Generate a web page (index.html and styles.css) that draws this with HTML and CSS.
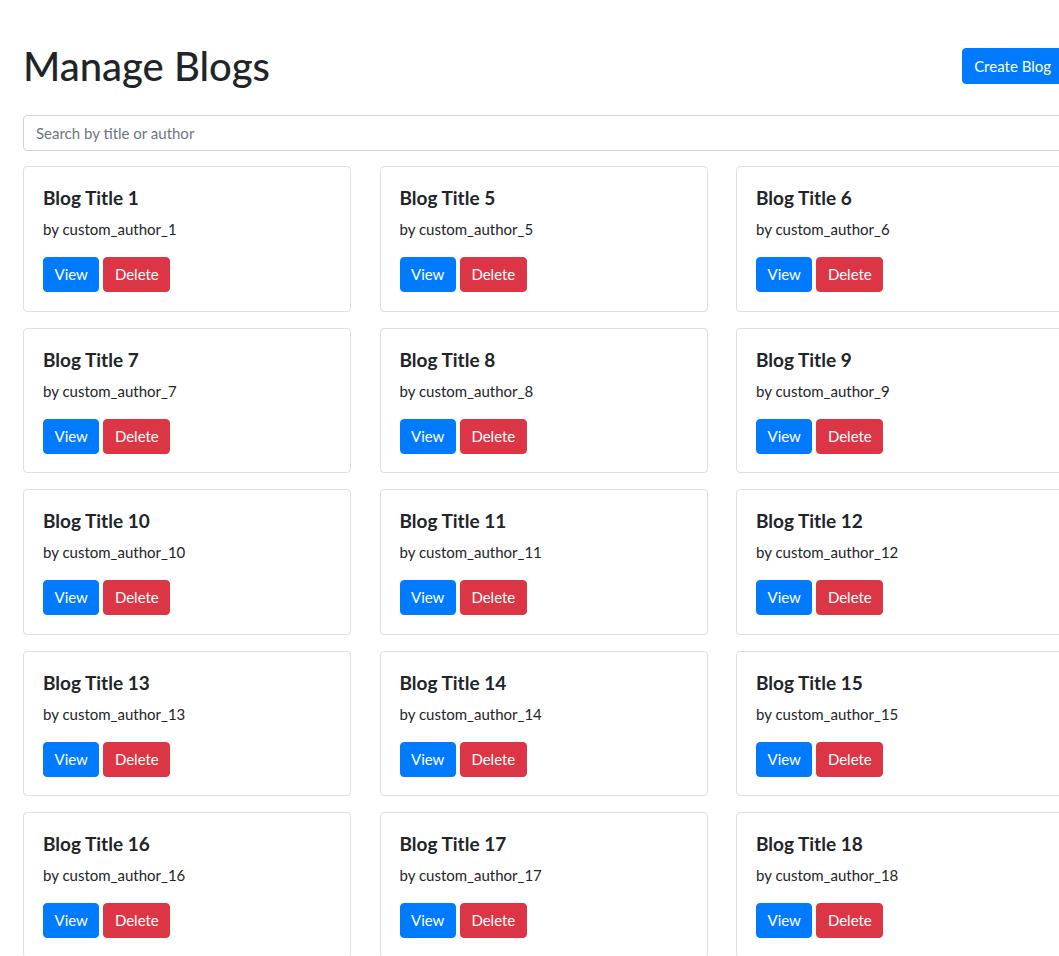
FILE: index.html
```html
<!DOCTYPE html>
<html lang="en">
<head>
<meta charset="utf-8">
<title>Manage Blogs</title>
<link rel="stylesheet" href="styles.css">
</head>
<body>
<div class="page">
  <header class="page-header">
    <h1 class="page-title">Manage Blogs</h1>
    <button class="btn btn-primary">Create Blog</button>
  </header>
  <input class="search" type="text" placeholder="Search by title or author">
  <div class="grid">
    <div class="card"><h5 class="card-title">Blog Title 1</h5><p class="card-author">by custom_author_1</p><div class="actions"><button class="btn btn-primary">View</button><button class="btn btn-danger">Delete</button></div></div>
    <div class="card"><h5 class="card-title">Blog Title 5</h5><p class="card-author">by custom_author_5</p><div class="actions"><button class="btn btn-primary">View</button><button class="btn btn-danger">Delete</button></div></div>
    <div class="card"><h5 class="card-title">Blog Title 6</h5><p class="card-author">by custom_author_6</p><div class="actions"><button class="btn btn-primary">View</button><button class="btn btn-danger">Delete</button></div></div>
    <div class="card"><h5 class="card-title">Blog Title 7</h5><p class="card-author">by custom_author_7</p><div class="actions"><button class="btn btn-primary">View</button><button class="btn btn-danger">Delete</button></div></div>
    <div class="card"><h5 class="card-title">Blog Title 8</h5><p class="card-author">by custom_author_8</p><div class="actions"><button class="btn btn-primary">View</button><button class="btn btn-danger">Delete</button></div></div>
    <div class="card"><h5 class="card-title">Blog Title 9</h5><p class="card-author">by custom_author_9</p><div class="actions"><button class="btn btn-primary">View</button><button class="btn btn-danger">Delete</button></div></div>
    <div class="card"><h5 class="card-title">Blog Title 10</h5><p class="card-author">by custom_author_10</p><div class="actions"><button class="btn btn-primary">View</button><button class="btn btn-danger">Delete</button></div></div>
    <div class="card"><h5 class="card-title">Blog Title 11</h5><p class="card-author">by custom_author_11</p><div class="actions"><button class="btn btn-primary">View</button><button class="btn btn-danger">Delete</button></div></div>
    <div class="card"><h5 class="card-title">Blog Title 12</h5><p class="card-author">by custom_author_12</p><div class="actions"><button class="btn btn-primary">View</button><button class="btn btn-danger">Delete</button></div></div>
    <div class="card"><h5 class="card-title">Blog Title 13</h5><p class="card-author">by custom_author_13</p><div class="actions"><button class="btn btn-primary">View</button><button class="btn btn-danger">Delete</button></div></div>
    <div class="card"><h5 class="card-title">Blog Title 14</h5><p class="card-author">by custom_author_14</p><div class="actions"><button class="btn btn-primary">View</button><button class="btn btn-danger">Delete</button></div></div>
    <div class="card"><h5 class="card-title">Blog Title 15</h5><p class="card-author">by custom_author_15</p><div class="actions"><button class="btn btn-primary">View</button><button class="btn btn-danger">Delete</button></div></div>
    <div class="card"><h5 class="card-title">Blog Title 16</h5><p class="card-author">by custom_author_16</p><div class="actions"><button class="btn btn-primary">View</button><button class="btn btn-danger">Delete</button></div></div>
    <div class="card"><h5 class="card-title">Blog Title 17</h5><p class="card-author">by custom_author_17</p><div class="actions"><button class="btn btn-primary">View</button><button class="btn btn-danger">Delete</button></div></div>
    <div class="card"><h5 class="card-title">Blog Title 18</h5><p class="card-author">by custom_author_18</p><div class="actions"><button class="btn btn-primary">View</button><button class="btn btn-danger">Delete</button></div></div>
  </div>
</div>
</body>
</html>
```
FILE: styles.css
```css
html {
  scrollbar-width: none;
}
html::-webkit-scrollbar { display: none; }
body {
  margin: 0;
  background: #fff;
  color: #212529;
  font-family: Lato, "Noto Sans", sans-serif;
  font-size: 16px;
  overflow-x: hidden;
}
.page {
  width: 1040px;
  padding: 42px 0 0 23px;
}
.page-header {
  display: flex;
  justify-content: space-between;
  align-items: center;
  height: 48px;
}
.page-title {
  margin: 0;
  font-size: 40px;
  font-weight: 500;
  line-height: 48px;
}
.btn {
  font-family: inherit;
  font-size: 15px;
  line-height: 33px;
  height: 35px;
  padding: 0 10.5px;
  border: 1px solid transparent;
  border-radius: 4px;
  color: #fff;
  cursor: pointer;
}
.page-header .btn { height: 36px; padding: 0 11px; }
.btn-primary { background: #007bff; border-color: #007bff; }
.btn-danger { background: #dc3545; border-color: #dc3545; }
.search {
  display: block;
  box-sizing: border-box;
  width: 100%;
  height: 36px;
  margin-top: 25px;
  padding: 0 12px;
  border: 1px solid #ced4da;
  border-radius: 4px;
  font-family: inherit;
  font-size: 15px;
  color: #495057;
}
.search::placeholder { color: #6c757d; }
.grid {
  display: grid;
  grid-template-columns: repeat(3, 328px);
  column-gap: 28.5px;
  row-gap: 16px;
  margin-top: 15px;
}
.card {
  box-sizing: border-box;
  height: 145.5px;
  padding: 19px 19px;
  border: 1px solid rgba(0, 0, 0, 0.125);
  border-radius: 4px;
}
.card-title {
  margin: 0 0 8px;
  font-size: 19px;
  font-weight: 700;
  line-height: 23px;
}
.card-author {
  margin: 0 0 16px;
  font-size: 15px;
  line-height: 24px;
}
.actions {
  display: flex;
  gap: 4px;
}
```
